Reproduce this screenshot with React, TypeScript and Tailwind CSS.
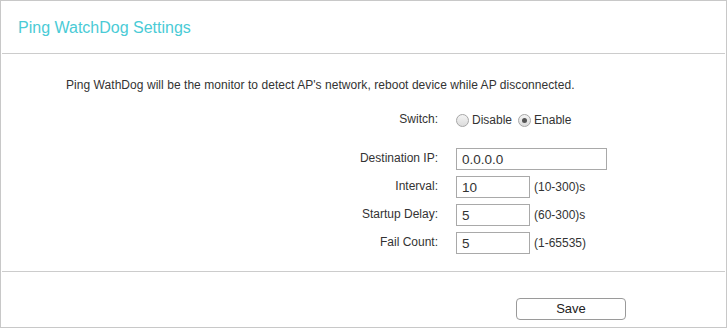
import React from "react";

function Radio({ checked }: { checked?: boolean }) {
  return (
    <span className="w-[13px] h-[13px] rounded-full border border-[#a6a6a6] bg-gradient-to-b from-[#f4f4f4] to-[#dcdcdc] flex items-center justify-center shrink-0">
      {checked && <span className="w-[5px] h-[5px] rounded-full bg-[#555]" />}
    </span>
  );
}

function Row({
  label,
  value,
  width,
  hint,
}: {
  label: string;
  value: string;
  width: string;
  hint?: string;
}) {
  return (
    <div className="flex items-center h-[22px]">
      <div className="w-[437px] text-right text-[12px] leading-[14px] -mt-[2px]">{label}</div>
      <input
        defaultValue={value}
        className={`${width} ml-[18px] h-[22px] border border-[#a9a9a9] bg-white px-[5px] text-[13.5px] text-[#333] outline-none`}
        style={{ fontFamily: '"Liberation Sans", Arial, sans-serif' }}
      />
      {hint && <span className="ml-[4px] text-[12px] leading-[14px]">{hint}</span>}
    </div>
  );
}

export default function App() {
  return (
    <div
      className="w-[727px] h-[328px] border border-[#c8c8c8] bg-white text-[#333] flex flex-col"
      style={{ fontFamily: '"Liberation Sans", Arial, sans-serif' }}
    >
      <div className="h-[52px] flex items-center pl-[17px] pt-[1px]">
        <h1 className="text-[16px] leading-[18px] text-[#4acbd6]">Ping WatchDog Settings</h1>
      </div>
      <div className="h-px mx-px bg-[#cccccc]" />
      <div className="h-[217px] flex flex-col">
        <p className="mt-[24px] pl-[65px] text-[12px] leading-[14px] tracking-[0.05px]">
          Ping WathDog will be the monitor to detect AP's network, reboot device while AP disconnected.
        </p>
        <div className="mt-[18px] h-[20px] flex items-center">
          <div className="w-[437px] text-right text-[12px] leading-[14px] -mt-[2px]">Switch:</div>
          <div className="ml-[18px] flex items-center text-[12px] leading-[14px]">
            <Radio />
            <span className="ml-[3px]">Disable</span>
            <span className="ml-[6px]">
              <Radio checked />
            </span>
            <span className="ml-[3px]">Enable</span>
          </div>
        </div>
        <div className="mt-[18px] flex flex-col gap-[6px]">
          <Row label="Destination IP:" value="0.0.0.0" width="w-[151px]" />
          <Row label="Interval:" value="10" width="w-[74px]" hint="(10-300)s" />
          <Row label="Startup Delay:" value="5" width="w-[74px]" hint="(60-300)s" />
          <Row label="Fail Count:" value="5" width="w-[74px]" hint="(1-65535)" />
        </div>
      </div>
      <div className="h-px mx-px bg-[#cccccc]" />
      <div className="h-[55px] pt-[24px] pl-[515px]">
        <button className="w-[110px] h-[22px] rounded-[4px] border border-[#9a9a9a] bg-white text-[13px] leading-[14px] text-[#222]">
          Save
        </button>
      </div>
    </div>
  );
}
